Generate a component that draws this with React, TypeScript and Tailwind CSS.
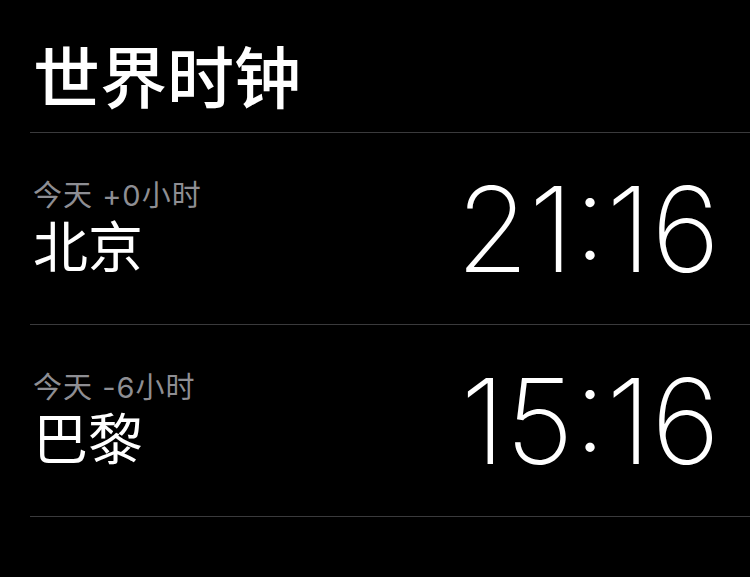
const clocks = [
  { offset: '今天 +0小时', city: '北京', time: '21:16' },
  { offset: '今天 -6小时', city: '巴黎', time: '15:16' },
];

export default function App() {
  return (
    <div
      className="w-[750px] h-[577px] bg-black text-white overflow-hidden pl-[30px]"
      style={{ fontFamily: 'Inter, "Noto Sans CJK SC", sans-serif' }}
    >
      {/* header */}
      <div className="h-[133px] border-b border-[#3a3a3c] flex items-end pb-[20px]">
        <h1 className="text-[67px] leading-none font-medium pl-[3px]">世界时钟</h1>
      </div>

      {clocks.map((c) => (
        <div
          key={c.city}
          className="h-[192px] border-b border-[#3a3a3c] flex items-center justify-between pr-[30px]"
        >
          <div className="flex flex-col pl-[3px] pt-[4px]">
            <span className="text-[29px] leading-[32px] tracking-[1px] text-[#8e8e93]">
              {c.offset}
            </span>
            <span className="text-[55px] leading-[70px]">{c.city}</span>
          </div>
          <span className="text-[118px] leading-none font-extralight">{c.time}</span>
        </div>
      ))}
    </div>
  );
}
